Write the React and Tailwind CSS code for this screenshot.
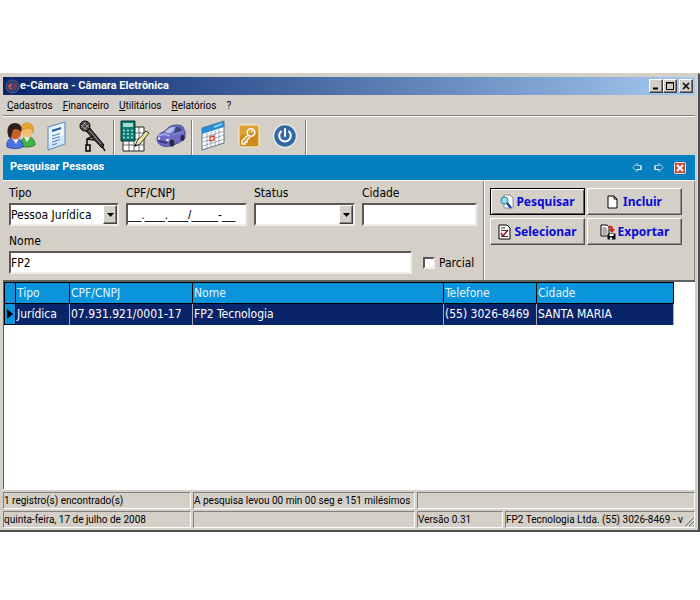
import React, { useState } from 'react';
import clsx from 'clsx';

const MENU = ['Cadastros', 'Financeiro', 'Utilitários', 'Relatórios', '?'];

const COLUMNS = [
  { key: 'tipo', label: 'Tipo', width: 'w-[54px]' },
  { key: 'doc', label: 'CPF/CNPJ', width: 'w-[123px]' },
  { key: 'nome', label: 'Nome', width: 'w-[251px]' },
  { key: 'telefone', label: 'Telefone', width: 'w-[93px]' },
  { key: 'cidade', label: 'Cidade', width: 'w-[137px]' },
];

const ROWS = [
  {
    tipo: 'Jurídica',
    doc: '07.931.921/0001-17',
    nome: 'FP2 Tecnologia',
    telefone: '(55) 3026-8469',
    cidade: 'SANTA MARIA',
  },
];

const SUNKEN =
  'border-2 border-t-[#5a5850] border-l-[#5a5850] border-b-[#f0eee8] border-r-[#f0eee8] bg-white';
const RAISED =
  'border border-t-white border-l-white border-b-[#404040] border-r-[#404040] bg-[#d4d0c8] shadow-[inset_-1px_-1px_0_#808080]';

/* ---------- toolbar icons ---------- */

const PeopleIcon = () => (
  <svg width="30" height="28" viewBox="0 0 30 28">
    <path d="M15 24c-1-6 2-9 7-9 4 0 7 3 7 8-3 2-9 3-14 1z" fill="#46b048" stroke="#1c7424" strokeWidth=".8" />
    <path d="M18 15l3 5 3-5z" fill="#f4f8e8" />
    <ellipse cx="21" cy="9" rx="5.500" ry="6.500" fill="#f4bc70" />
    <path d="M15 9c-1-5 2-8 6-8s8 3 6 10c-1-4-3-5-5-5-3 1-5 1-7 3z" fill="#e8a428" stroke="#c08418" strokeWidth=".6" />
    <path d="M1 25c-1-6 2-9 7-9 5 0 9 3 9 9-4 2-12 2-16 0z" fill="#4c74dc" stroke="#2040a0" strokeWidth=".8" />
    <path d="M6 16l4 6 3-6z" fill="#f0f4ff" />
    <ellipse cx="9.500" cy="11" rx="5.500" ry="6.500" fill="#c8602c" />
    <path d="M2 13C0 5 4 1 9 1s8 4 6 9c-2-3-4-3-6-3-3 0-3 6-4 9-2 0-3-2-3-3z" fill="#30201c" />
  </svg>
);

const DocumentIcon = () => (
  <svg width="22" height="30" viewBox="0 0 22 30">
    <path d="M2 6l17-5v22L2 29z" fill="#d4e6fa" stroke="#5c84bc" />
    <path d="M3 7l15-5v12L3 22z" fill="#fff" opacity=".55" />
    <path d="M6 10l9-3" stroke="#2458a8" strokeWidth="2" />
    <path d="M6 15l8-2.500M6 18l8-2.500M6 21l8-2.500M6 24l5-1.500" stroke="#5884c4" strokeWidth="1.200" />
  </svg>
);

const MicrophoneIcon = () => (
  <svg width="30" height="32" viewBox="0 0 30 32">
    <path d="M8 11l3-4 15 18-2 3z" fill="#3a3a3a" stroke="#000" />
    <path d="M11 10l12 14" stroke="#9a9a9a" />
    <circle cx="7" cy="6" r="5" fill="#444" stroke="#000" />
    <path d="M3 5l6 5M5 2l6 6M3 8l5-6M6 10l5-6" stroke="#c0c0c0" strokeWidth=".7" />
    <path d="M15 16l-6 3v7M9 19l8 1" fill="none" stroke="#111" strokeWidth="1.600" />
    <path d="M8 25h4v6H8z" fill="#d4d0c8" stroke="#000" strokeWidth="1.500" />
    <path d="M24 26l3 5" stroke="#000" strokeWidth="1.400" />
  </svg>
);

const CalculatorIcon = () => (
  <svg width="30" height="32" viewBox="0 0 30 32">
    <path d="M3 7h21v24H3z" fill="#fff" stroke="#222" />
    <path d="M3 13h21M3 19h21M3 25h21M9 7v24M14 7v24M19 7v24" stroke="#444" strokeWidth=".8" />
    <path d="M1 1h14v20H1z" fill="#0c7a74" stroke="#03332f" />
    <path d="M3 3h10v4H3z" fill="#a8dcc8" />
    <path d="M3 10.500h10M3 14h10M3 17.500h10" stroke="#b0e0d4" strokeWidth="1.600" strokeDasharray="2 2" />
    <path d="M15 26l2-5 9-10 3 2-9 11z" fill="#f0e8a0" stroke="#222" strokeWidth=".9" />
    <path d="M14 27l1.500-3 2 1.500z" fill="#111" />
  </svg>
);

const CarIcon = () => (
  <svg width="30" height="26" viewBox="0 0 30 26">
    <path d="M1 16c0-4 3-6 8-8 3-4 6-6 12-6 5 0 7 2 7 5 2 1 1 5 1 8-3 4-9 6-14 8C8 25 1 22 1 16z" fill="#6c6cc8" stroke="#40408c" strokeWidth=".8" />
    <path d="M9 9c3-4 6-5 10-5-1 3-2 5-4 6-2 0-4 0-6-1z" fill="#b8c0e8" />
    <path d="M20 4c4 0 5 1 6 4l-8 2z" fill="#40447c" />
    <path d="M2 13c4-2 9-2 12 0" stroke="#a4a4e8" strokeWidth="2" fill="none" />
    <path d="M16 12l11-3" stroke="#9494dc" />
    <ellipse cx="16" cy="20" rx="2.500" ry="3.500" fill="#28283c" />
    <ellipse cx="26.500" cy="15" rx="2" ry="3" fill="#28283c" />
    <path d="M3 18l8 2" stroke="#34347c" strokeWidth="2" />
    <ellipse cx="3" cy="15.500" rx="1.200" ry="1" fill="#fff" />
    <ellipse cx="11.500" cy="17" rx="1.500" ry="1" fill="#fff" />
  </svg>
);

const CalendarIcon = () => (
  <svg width="24" height="32" viewBox="0 0 24 32">
    <path d="M1 8L23 1v22L1 30z" fill="#fff" stroke="#54708c" />
    <path d="M1 8L23 1v6L1 14z" fill="#2a8cd4" />
    <path d="M13 6l8-3v2l-8 3z" fill="#8cd0f4" />
    <path d="M2 18l21-7M2 22l21-7M2 26l21-7M6 13v15M10 12v15M14 11v15M18 9v15" stroke="#8a98a8" strokeWidth=".8" />
    <path d="M9 17l4-1v4l-4 1z" fill="#fff" stroke="#d8402c" strokeWidth="1.300" />
  </svg>
);

const KeyIcon = () => (
  <svg width="22" height="26" viewBox="0 0 22 26">
    <rect x="1" y="2" width="20" height="22" rx="2" fill="#dca030" stroke="#f8ecd0" />
    <path d="M2 13l18-5v15H2z" fill="#c07c10" opacity=".55" />
    <circle cx="13" cy="9.500" r="3.800" fill="none" stroke="#fff" strokeWidth="1.600" />
    <path d="M10 12l-6 6v3h3v-2h2v-2l3-3" fill="none" stroke="#fff" strokeWidth="1.400" />
    <circle cx="14" cy="8.500" r=".9" fill="#fff" />
  </svg>
);

const PowerIcon = () => (
  <svg width="26" height="26" viewBox="0 0 26 26">
    <circle cx="13" cy="13" r="11.500" fill="#3468a4" stroke="#e0e8f0" strokeWidth="1.500" />
    <path d="M9 8.500a5.800 5.800 0 1 0 8 0" fill="none" stroke="#fff" strokeWidth="2" strokeLinecap="round" />
    <path d="M13 6v7" stroke="#fff" strokeWidth="2" strokeLinecap="round" />
  </svg>
);

/* ---------- small icons ---------- */

const AppIcon = () => (
  <svg width="15" height="15" viewBox="0 0 15 15">
    <circle cx="7.500" cy="7.500" r="6.500" fill="#283c70" stroke="#5c6890" strokeWidth=".8" />
    <path d="M3 7h4M7 5a2.500 2.500 0 1 0 0 5" fill="none" stroke="#e04c38" strokeWidth="1.500" />
    <path d="M12 5H9v5h3M9 7.500h3" fill="none" stroke="#984058" strokeWidth="1.200" />
  </svg>
);

const SearchDocIcon = () => (
  <svg width="14" height="16" viewBox="0 0 14 16">
    <path d="M4 1h6l3 3v10H4z" fill="#fff" stroke="#8a8a9a" />
    <circle cx="4.500" cy="6.500" r="3.500" fill="#90dcec" stroke="#307890" />
    <path d="M7 9l4 5" stroke="#1848a8" strokeWidth="2.500" />
  </svg>
);

const NewDocIcon = () => (
  <svg width="14" height="14" viewBox="0 0 14 14">
    <path d="M1 1h6l3 3v9H1z" fill="#fff" stroke="#000" />
    <path d="M7 1v3h3" fill="none" stroke="#000" />
  </svg>
);

const CheckDocIcon = () => (
  <svg width="14" height="16" viewBox="0 0 14 16">
    <path d="M1 1h8l3 3v11H1z" fill="#fff" stroke="#000" />
    <path d="M3 4h4M3 6.500h7M3 12.500h7" stroke="#333" />
    <path d="M3 9l2 3 5-6" fill="none" stroke="#a01828" strokeWidth="1.600" />
  </svg>
);

const ExportIcon = () => (
  <svg width="16" height="16" viewBox="0 0 16 16">
    <path d="M1 1h6l2 2v9H1z" fill="#fff" stroke="#000" />
    <path d="M2.500 4h4M2.500 6h5M2.500 8h5M2.500 10h4" stroke="#333" strokeWidth=".8" />
    <path d="M8 2c3-1 5 0 5 3h2l-3 4-3-4h2c0-1-1-2-3-2z" fill="#d81818" />
    <path d="M7.500 9.500h8v6h-8z" fill="#111" />
    <path d="M9.500 10h4v2h-4zM10 13.500h2v2h-2z" fill="#fff" />
  </svg>
);

const ArrowIcon = ({ flip }) => (
  <svg width="11" height="11" viewBox="0 0 11 11" className={clsx(flip && '-scale-x-100')}>
    <path d="M1 5.500L5 1.500v2h4v4H5v2z" fill="#1474a8" stroke="#a8dcf0" />
    <path d="M5 7.500h4v-4" fill="none" stroke="#fff" />
  </svg>
);

const CloseIcon = () => (
  <svg width="12" height="12" viewBox="0 0 12 12">
    <rect x=".5" y=".5" width="11" height="11" rx="1" fill="#cc5040" stroke="#f4d8d0" />
    <path d="M3 3l6 6M9 3L3 9" stroke="#fff" strokeWidth="2" />
  </svg>
);

const TOOLBAR = [
  [
    { name: 'Pessoas', Icon: PeopleIcon },
    { name: 'Documentos', Icon: DocumentIcon },
    { name: 'Sessões', Icon: MicrophoneIcon },
  ],
  [
    { name: 'Contabilidade', Icon: CalculatorIcon },
    { name: 'Veículos', Icon: CarIcon },
  ],
  [
    { name: 'Agenda', Icon: CalendarIcon },
    { name: 'Senha', Icon: KeyIcon },
    { name: 'Sair', Icon: PowerIcon },
  ],
];

/* ---------- pieces ---------- */

const WindowButton = ({ label, children }) => (
  <button aria-label={label} className={clsx(RAISED, 'flex h-[14px] w-[14px] items-center justify-center')}>
    <svg width="10" height="10" viewBox="0 0 10 10" fill="none" stroke="#000">
      {children}
    </svg>
  </button>
);

const TitleBar = () => (
  <header className="flex h-[18px] items-center bg-linear-to-r from-[#0a246a] to-[#a6caf0] pr-0.5 pl-0.5">
    <AppIcon />
    <h1 className="flex-1 font-['Roboto',sans-serif] text-[11px] leading-4 font-bold text-white">
      e-Câmara - Câmara Eletrônica
    </h1>
    <WindowButton label="Minimizar">
      <path d="M2 7.500h5" strokeWidth="2" />
    </WindowButton>
    <WindowButton label="Maximizar">
      <path d="M1.500 1.500h7v7h-7zM1 2h8" />
    </WindowButton>
    <div className="w-0.5" />
    <WindowButton label="Fechar">
      <path d="M2 2l6 6M8 2L2 8" strokeWidth="1.500" />
    </WindowButton>
  </header>
);

const MenuBar = () => (
  <nav className="flex h-5 items-center gap-2.5 px-1 font-['Roboto',sans-serif] text-[10px]">
    {MENU.map((item) => (
      <button key={item}>
        {item === '?' ? item : <span className="underline">{item[0]}</span>}
        {item !== '?' && item.slice(1)}
      </button>
    ))}
  </nav>
);

const Toolbar = () => (
  <div className="flex h-10 items-stretch border-t border-[#808080] shadow-[inset_0_1px_0_#fff]">
    {TOOLBAR.map((group, i) => (
      <React.Fragment key={i}>
        {group.map(({ name, Icon }) => (
          <button key={name} aria-label={name} className="flex w-9 items-center justify-center">
            <Icon />
          </button>
        ))}
        <div className="mx-0.5 mt-1 w-0.5 border-l border-[#808080] bg-white" />
      </React.Fragment>
    ))}
  </div>
);

const Field = ({ id, label, className, children }) => (
  <div className={className}>
    <label htmlFor={id} className="block h-[18px] leading-4">
      {label}
    </label>
    {children}
  </div>
);

const TextBox = ({ className, ...props }) => (
  <input type="text" className={clsx(SUNKEN, 'block h-[23px] w-full outline-none', className)} {...props} />
);

const ComboBox = ({ id, options }) => (
  <div className="relative">
    <select id={id} className={clsx(SUNKEN, 'block h-[23px] w-full appearance-none pr-4 outline-none')}>
      {options.map((option) => (
        <option key={option}>{option}</option>
      ))}
    </select>
    <span
      className={clsx(RAISED, 'pointer-events-none absolute top-0.5 right-0.5 bottom-0.5 flex w-3.5 items-center justify-center')}
    >
      <svg width="7" height="4" viewBox="0 0 7 4">
        <path d="M0 0h7L3.500 4z" />
      </svg>
    </span>
  </div>
);

const ActionButton = ({ icon, active, children }) => (
  <button
    className={clsx(
      "flex h-[27px] w-[95px] items-center justify-center gap-0.5 border bg-[#d4d0c8] font-['Noto_Sans',sans-serif] text-[12px] font-bold text-[#0808d8]",
      active
        ? 'border-black shadow-[inset_1px_1px_0_#fff,inset_-1px_-1px_0_#606060]'
        : 'border-t-white border-l-white border-r-[#505050] border-b-[#505050] shadow-[inset_-1px_-1px_0_#909090]'
    )}
  >
    {icon}
    {children}
  </button>
);

const StatusCell = ({ className, children }) => (
  <div
    className={clsx(
      'h-[17px] border border-t-[#808080] border-l-[#808080] border-r-white border-b-white leading-4 whitespace-nowrap',
      className
    )}
  >
    {children}
  </div>
);

const SearchForm = () => {
  const [nome, setNome] = useState('FP2');
  const [doc, setDoc] = useState('__.___.___/____-__');
  const [parcial, setParcial] = useState(false);

  return (
    <form className="flex h-[100px] border-t border-white" onSubmit={(e) => e.preventDefault()}>
      <div className="w-[481px] border-r border-[#808080] pt-1 pr-1.5 pl-1.5">
        <div className="flex gap-[7px]">
          <Field id="tipo" label="Tipo" className="w-[110px]">
            <ComboBox id="tipo" options={['Pessoa Jurídica', 'Pessoa Física']} />
          </Field>
          <Field id="doc" label="CPF/CNPJ" className="w-[121px]">
            <TextBox
              id="doc"
              value={doc}
              onChange={(e) => setDoc(e.target.value)}
              className="font-['Liberation_Sans',sans-serif]"
            />
          </Field>
          <Field id="status" label="Status" className="w-[101px]">
            <ComboBox id="status" options={['', 'Ativo', 'Inativo']} />
          </Field>
          <Field id="cidade" label="Cidade" className="flex-1">
            <TextBox id="cidade" />
          </Field>
        </div>
        <div className="mt-[7px] flex items-end">
          <Field id="nome" label="Nome" className="w-[403px]">
            <TextBox id="nome" value={nome} onChange={(e) => setNome(e.target.value)} />
          </Field>
          <label className="ml-[11px] flex h-[23px] items-center gap-1">
            <input
              type="checkbox"
              checked={parcial}
              onChange={(e) => setParcial(e.target.checked)}
              className={clsx(SUNKEN, 'h-3 w-3 appearance-none checked:bg-[#0a246a]')}
            />
            Parcial
          </label>
        </div>
      </div>
      <div className="flex-1 border-r border-l border-r-[#808080] border-l-white pt-[7px] pl-[5px]">
        <div className="grid w-fit grid-cols-2 gap-x-0.5 gap-y-[3px]">
          <ActionButton icon={<SearchDocIcon />} active>
            Pesquisar
          </ActionButton>
          <ActionButton icon={<NewDocIcon />}>Incluir</ActionButton>
          <ActionButton icon={<CheckDocIcon />}>Selecionar</ActionButton>
          <ActionButton icon={<ExportIcon />}>Exportar</ActionButton>
        </div>
      </div>
    </form>
  );
};

const ResultsTable = () => (
  <div className="h-[209px] overflow-hidden border-t-2 border-l border-[#606060] bg-white">
    <table className="table-fixed border-collapse text-left">
      <thead>
        <tr className="h-[21px] bg-[#0a94dc] text-[#e4f4fc]">
          <th className="w-[11px] border border-black" aria-label="Selecionado" />
          {COLUMNS.map((col) => (
            <th key={col.key} className={clsx(col.width, 'border border-black px-px leading-4 font-normal')}>
              {col.label}
            </th>
          ))}
        </tr>
      </thead>
      <tbody>
        {ROWS.map((row) => (
          <tr key={row.doc} className="h-[21px] bg-[#0a246a] text-white">
            <td className="border border-black bg-[#0a94dc]">
              <svg width="6" height="10" viewBox="0 0 6 10" className="ml-0.5">
                <path d="M0 0l6 5-6 5z" />
              </svg>
            </td>
            {COLUMNS.map((col) => (
              <td key={col.key} className="border-r border-[#a8a8b8] px-px leading-4 whitespace-nowrap">
                {row[col.key]}
              </td>
            ))}
          </tr>
        ))}
      </tbody>
    </table>
  </div>
);

const App = () => (
  <div className="min-h-screen bg-white pt-[73px] font-['DejaVu_Sans_Condensed','DejaVu_Sans',sans-serif] text-[12px] text-black">
    <main className="border-t border-r-2 border-b-2 border-t-[#d4d0c8] border-r-[#505050] border-b-[#505050] bg-[#d4d0c8] pt-[3px] pr-[3px] pb-0.5 pl-[3px]">
      <TitleBar />
      <MenuBar />
      <Toolbar />
      <div className="flex h-[25px] items-center gap-2.5 bg-[#0480c0] pr-[9px] pl-[7px] text-white">
        <h2 className="flex-1 font-['Roboto',sans-serif] text-[11px] font-bold">Pesquisar Pessoas</h2>
        <button aria-label="Anterior">
          <ArrowIcon />
        </button>
        <button aria-label="Próximo">
          <ArrowIcon flip />
        </button>
        <button aria-label="Fechar pesquisa">
          <CloseIcon />
        </button>
      </div>
      <SearchForm />
      <ResultsTable />
      <footer className="flex flex-col gap-0.5 border-t border-white pt-0.5 font-['Roboto',sans-serif] text-[10px]">
        <div className="flex gap-0.5">
          <StatusCell className="w-[188px] shrink-0">1 registro(s) encontrado(s)</StatusCell>
          <StatusCell className="w-[222px] shrink-0">A pesquisa levou 00 min 00 seg e 151 milésimos</StatusCell>
          <StatusCell className="flex-1" />
        </div>
        <div className="flex gap-0.5">
          <StatusCell className="w-[188px] shrink-0">quinta-feira, 17 de julho de 2008</StatusCell>
          <StatusCell className="w-[222px] shrink-0" />
          <StatusCell className="w-[86px] shrink-0">Versão 0.31</StatusCell>
          <StatusCell className="flex flex-1 justify-between">
            <span>FP2 Tecnologia Ltda. (55) 3026-8469 - v</span>
            <svg width="10" height="15" viewBox="0 0 10 15" className="shrink-0">
              <path d="M1 14l9-9M5 14l5-5M9 14l1-1" stroke="#808080" strokeWidth="1.500" />
              <path d="M0 14L10 4M4 14l6-6M8 14l2-2" stroke="#fff" strokeWidth=".7" />
            </svg>
          </StatusCell>
        </div>
      </footer>
    </main>
  </div>
);

export default App;
